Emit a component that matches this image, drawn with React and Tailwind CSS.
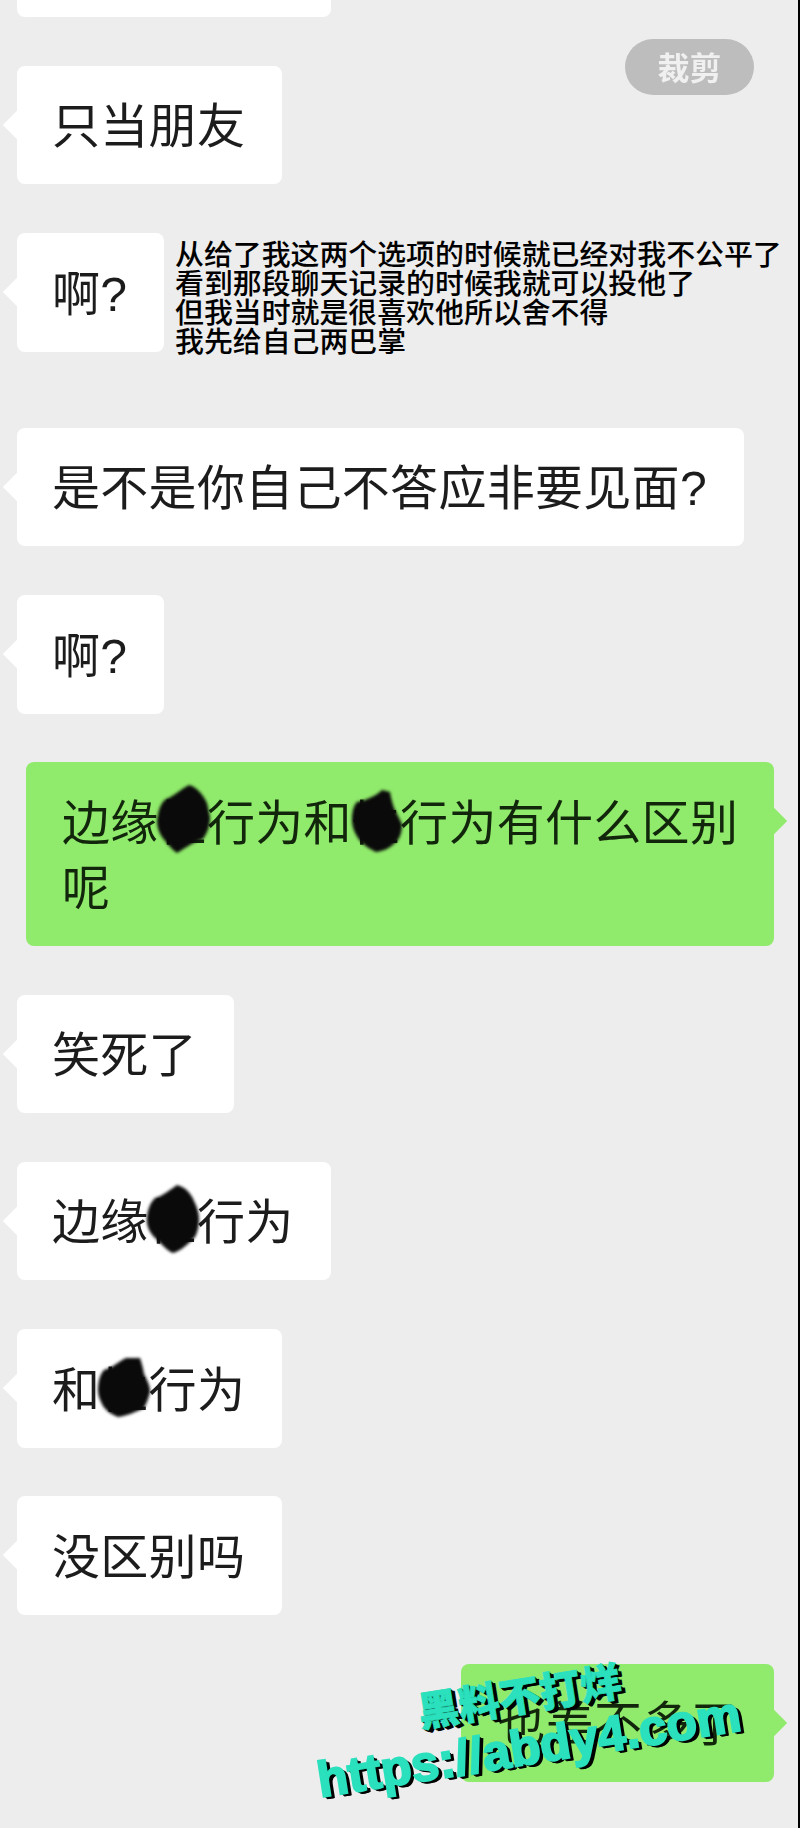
import React from "react";

const CJK = "font-['Liberation_Sans','Noto_Sans_CJK_SC',sans-serif]";

function Bubble({ children, green = false, className = "" }) {
  const bg = green ? "bg-[#90ea6b]" : "bg-white";
  return (
    <div
      className={`relative rounded-[8px] pb-[25px] pt-[28.5px] text-[48px] leading-[65px] tracking-[0.3px] ${bg} ${
        green ? "self-end pl-[36px] pr-[30px] text-[#12260c]" : "self-start pl-[35px] pr-[37px] text-[#1c1c1c]"
      } ${className}`}
    >
      <div
        className={`absolute top-[49px] h-5 w-5 rotate-45 ${bg} ${
          green ? "right-[-9px]" : "left-[-10px]"
        }`}
      />
      <div className="relative blur-[0.4px]">{children}</div>
    </div>
  );
}

function Blob({ x, y, w, h, d }) {
  return (
    <svg
      className="absolute blur-[1.5px]"
      style={{ left: x, top: y }}
      width={w}
      height={h}
      viewBox={`0 0 ${w} ${h}`}
      overflow="visible"
    >
      <path d={d} fill="#0a0a0a" />
    </svg>
  );
}

const shadow = "text-[#2ae0bd] [text-shadow:1px_1px_0_#000,2px_2px_0_#000,3px_3px_0_#000,4px_3px_0_#000]";

export default function App() {
  return (
    <div
      className={`relative flex h-[1828px] w-[800px] flex-col gap-[48.75px] overflow-hidden border-r-2 border-black bg-[#ededed] pl-[17px] pr-[24px] ${CJK}`}
    >
      <div className="h-[17px] w-[314px] shrink-0 rounded-b-[8px] bg-white" />
      <Bubble>只当朋友</Bubble>
      <Bubble className="pr-[27px]">啊?</Bubble>
      <Bubble className="mt-[27.5px] pr-[35px]">是不是你自己不答应非要见面?</Bubble>
      <Bubble className="pr-[27px]">啊?</Bubble>
      <Bubble green className="w-[748px]">
        边缘性行为和性行为有什么区别呢
      </Bubble>
      <Bubble className="pr-[34px]">笑死了</Bubble>
      <Bubble>边缘性行为</Bubble>
      <Bubble>和性行为</Bubble>
      <Bubble>没区别吗</Bubble>
      <Bubble green className="pr-[35px]">也差不多了</Bubble>

      {/* Annotations laid over the screenshot */}
      <div className="absolute left-[625px] top-[39px] flex h-[56px] w-[129px] items-center justify-center rounded-full bg-[#bdbdbd] pt-[3px] text-[32px] font-bold text-[#f0f0f0] blur-[0.4px]">
        裁剪
      </div>
      <div className="absolute left-[175px] top-[241px] whitespace-nowrap text-[28.9px] font-medium leading-[29px] text-black">
        <div>从给了我这两个选项的时候就已经对我不公平了</div>
        <div>看到那段聊天记录的时候我就可以投他了</div>
        <div>但我当时就是很喜欢他所以舍不得</div>
        <div>我先给自己两巴掌</div>
      </div>

      {/* Hand-scribbled redactions */}
      <Blob x={157} y={785} w={53} h={68} d="M32 0C40 2 46 10 50 18L53 32C53 42 50 48 46 54C38 56 30 62 20 68C14 64 10 58 5 52C0 44 -1 36 1 30C2 24 4 18 9 14C16 12 24 4 32 0Z" />
      <Blob x={352} y={790} w={50} h={62} d="M30 0L38 2C39 8 40 12 42 18L50 34C50 42 48 48 44 52C38 58 32 61 24 62C16 58 10 54 6 48C2 42 0 36 0 30C0 24 1 16 5 12C14 10 24 6 30 0Z" />
      <Blob x={147} y={1185} w={52} h={68} d="M30 0C38 2 44 8 47 16C50 22 52 28 52 34C52 42 50 48 48 52C42 58 34 66 26 68C20 66 14 58 7 52C2 46 -1 40 0 32C1 24 3 18 8 13C16 11 24 4 30 0Z" />
      <Blob x={98} y={1358} w={52} h={59} d="M28 0L42 0C44 6 45 10 46 16C50 24 52 28 52 34C50 42 48 46 46 50C38 54 28 58 20 59C12 56 8 52 5 48C2 42 0 38 0 32C0 24 2 16 6 12C14 10 20 4 28 0Z" />

      {/* Watermark */}
      <div className={`absolute left-[519px] top-[1694px] -translate-x-1/2 -translate-y-1/2 rotate-[-9deg] whitespace-nowrap font-['Noto_Sans_CJK_SC',sans-serif] text-[41px] font-black leading-none [-webkit-text-stroke:0.8px_#2ae0bd] ${shadow}`}>
        黑料不打烊
      </div>
      <div className={`absolute left-[529px] top-[1747px] -translate-x-1/2 -translate-y-1/2 rotate-[-9deg] whitespace-nowrap font-['Liberation_Sans',sans-serif] text-[50px] font-bold leading-none [-webkit-text-stroke:2px_#2ae0bd] ${shadow}`}>
        https://abdy4.com
      </div>
    </div>
  );
}
